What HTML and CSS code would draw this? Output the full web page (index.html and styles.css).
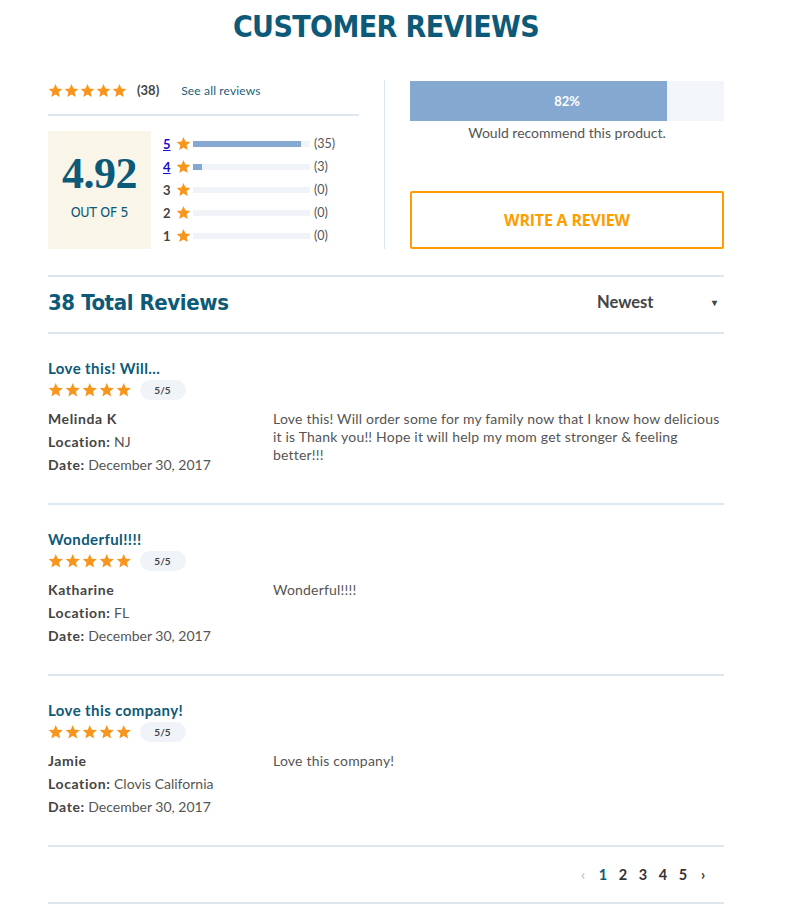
FILE: index.html
```html
<!DOCTYPE html>
<html>
<head>
<meta charset="utf-8">
<link rel="stylesheet" href="styles.css">
</head>
<body>
<svg width="0" height="0" class="defs">
  <defs>
    <symbol id="star" viewBox="0 0 24 24"><path d="M12 1.5l3.1 7.3 7.9.6-6 5.2 1.8 7.7L12 18.2l-6.8 4.1L7 14.6 1 9.4l7.9-.6z"/></symbol>
  </defs>
</svg>
<div class="page">
  <h1 class="title">CUSTOMER REVIEWS</h1>

  <div class="summary">
    <div class="summary-left">
      <div class="top-row">
        <span class="stars">
          <svg class="st"><use href="#star"/></svg><svg class="st"><use href="#star"/></svg><svg class="st"><use href="#star"/></svg><svg class="st"><use href="#star"/></svg><svg class="st"><use href="#star"/></svg>
        </span>
        <span class="count-total">(38)</span>
        <a class="see-all">See all reviews</a>
      </div>
      <div class="score-area">
        <div class="score-box">
          <div class="score">4.92</div>
          <div class="outof">OUT OF 5</div>
        </div>
        <div class="bars">
          <div class="bar-row"><a class="lbl link">5</a><svg class="bst"><use href="#star"/></svg><span class="track"><span class="fill" style="width:92%"></span></span><span class="cnt">(35)</span></div>
          <div class="bar-row"><a class="lbl link">4</a><svg class="bst"><use href="#star"/></svg><span class="track"><span class="fill" style="width:8%"></span></span><span class="cnt">(3)</span></div>
          <div class="bar-row"><span class="lbl">3</span><svg class="bst"><use href="#star"/></svg><span class="track"></span><span class="cnt">(0)</span></div>
          <div class="bar-row"><span class="lbl">2</span><svg class="bst"><use href="#star"/></svg><span class="track"></span><span class="cnt">(0)</span></div>
          <div class="bar-row"><span class="lbl">1</span><svg class="bst"><use href="#star"/></svg><span class="track"></span><span class="cnt">(0)</span></div>
        </div>
      </div>
    </div>
    <div class="summary-right">
      <div class="rec-bar">
        <div class="rec-fill" style="width:82%"></div>
        <div class="rec-label">82%</div>
      </div>
      <div class="rec-text">Would recommend this product.</div>
      <button class="write-btn">WRITE A REVIEW</button>
    </div>
  </div>

  <div class="list-head">
    <h2 class="total">38 Total Reviews</h2>
    <div class="sort"><span>Newest</span><span class="caret">&#9662;</span></div>
  </div>

  <div class="review">
    <div class="r-title">Love this! Will...</div>
    <div class="r-rating">
      <span class="stars rs"><svg class="st"><use href="#star"/></svg><svg class="st"><use href="#star"/></svg><svg class="st"><use href="#star"/></svg><svg class="st"><use href="#star"/></svg><svg class="st"><use href="#star"/></svg></span>
      <span class="pill">5/5</span>
    </div>
    <div class="r-body">
      <div class="meta">
        <div class="name">Melinda K</div>
        <div><b>Location:</b> NJ</div>
        <div><b>Date:</b> December 30, 2017</div>
      </div>
      <p class="text">Love this! Will order some for my family now that I know how delicious it is Thank you!! Hope it will help my mom get stronger &amp; feeling better!!!</p>
    </div>
  </div>

  <div class="review">
    <div class="r-title">Wonderful!!!!</div>
    <div class="r-rating">
      <span class="stars rs"><svg class="st"><use href="#star"/></svg><svg class="st"><use href="#star"/></svg><svg class="st"><use href="#star"/></svg><svg class="st"><use href="#star"/></svg><svg class="st"><use href="#star"/></svg></span>
      <span class="pill">5/5</span>
    </div>
    <div class="r-body">
      <div class="meta">
        <div class="name">Katharine</div>
        <div><b>Location:</b> FL</div>
        <div><b>Date:</b> December 30, 2017</div>
      </div>
      <p class="text">Wonderful!!!!</p>
    </div>
  </div>

  <div class="review">
    <div class="r-title">Love this company!</div>
    <div class="r-rating">
      <span class="stars rs"><svg class="st"><use href="#star"/></svg><svg class="st"><use href="#star"/></svg><svg class="st"><use href="#star"/></svg><svg class="st"><use href="#star"/></svg><svg class="st"><use href="#star"/></svg></span>
      <span class="pill">5/5</span>
    </div>
    <div class="r-body">
      <div class="meta">
        <div class="name">Jamie</div>
        <div><b>Location:</b> Clovis California</div>
        <div><b>Date:</b> December 30, 2017</div>
      </div>
      <p class="text">Love this company!</p>
    </div>
  </div>

  <div class="pager">
    <span class="pg prev">&#8249;</span>
    <span class="pg current">1</span>
    <span class="pg">2</span>
    <span class="pg">3</span>
    <span class="pg">4</span>
    <span class="pg">5</span>
    <span class="pg next">&#8250;</span>
  </div>
</div>
</body>
</html>
```

FILE: styles.css
```css
* { box-sizing: border-box; }
body {
  margin: 0;
  background: #fff;
  font-family: Lato, "Open Sans", sans-serif;
  color: #444;
}
.defs { position: absolute; width: 0; height: 0; }
.page {
  width: 676px;
  margin-left: 48px;
}
.title {
  margin: 0;
  padding-top: 8px;
  height: 80px;
  text-align: center;
  font-family: "DejaVu Sans Condensed", "Open Sans", sans-serif;
  font-weight: bold;
  font-size: 30px;
  line-height: 38px;
  color: #0d5a78;
  letter-spacing: -0.6px;
}
.summary {
  display: grid;
  grid-template-columns: 312px 314px;
  column-gap: 50px;
  border-bottom: 2px solid #dde7f0;
  padding-bottom: 26px;
}
.summary-left {
  border-right: 1px solid #dde7f0;
  margin-right: -25px;
  padding-right: 25px;
}
.top-row {
  display: flex;
  align-items: center;
  height: 20px;
  padding-bottom: 14px;
  border-bottom: 2px solid #dde7f0;
  box-sizing: content-box;
}
.stars { display: inline-flex; gap: 1px; }
.st { width: 15px; height: 15px; fill: #f7961e; }
.rs { gap: 1.5px; }
.rs .st { width: 15.5px; height: 15.5px; }
.count-total {
  margin-left: 10px;
  font-weight: bold;
  font-size: 13px;
  color: #444;
}
.see-all {
  margin-left: 22px;
  font-size: 12px;
  color: #1a5f7c;
  letter-spacing: 0.15px;
}
.score-area {
  display: flex;
  margin-top: 16px;
  gap: 12px;
}
.score-box {
  width: 103px;
  height: 118px;
  margin-top: -1px;
  padding-bottom: 10px;
  background: #f9f6e9;
  display: flex;
  flex-direction: column;
  align-items: center;
  justify-content: center;
  color: #0d5a78;
}
.score {
  font-family: "Liberation Serif", serif;
  font-weight: bold;
  font-size: 44px;
  line-height: 48px;
  letter-spacing: -0.5px;
}
.outof {
  font-family: "DejaVu Sans Condensed", sans-serif;
  font-size: 14px;
  margin-top: 6px;
  letter-spacing: -0.3px;
}
.bars { display: flex; flex-direction: column; }
.bar-row {
  display: flex;
  align-items: center;
  height: 23px;
}
.lbl {
  width: 10px;
  font-size: 13px;
  font-weight: bold;
  color: #444;
}
.lbl.link { color: #1a0dcc; text-decoration: underline; }
.bst { width: 15px; height: 15px; fill: #f7961e; margin-left: 3px; }
.track {
  width: 117px;
  height: 6px;
  background: #f0f4f8;
  margin-left: 2px;
  display: block;
}
.fill { display: block; height: 6px; background: #84a8cf; }
.cnt { margin-left: 4px; font-size: 12.5px; color: #555; }

.summary-right { padding-top: 1px; }
.rec-bar {
  display: grid;
  height: 40px;
  background: #f2f6fa;
}
.rec-fill {
  grid-area: 1 / 1;
  height: 40px;
  background: #84a8cf;
}
.rec-label {
  grid-area: 1 / 1;
  color: #fff;
  font-weight: bold;
  font-size: 13px;
  line-height: 40px;
  text-align: center;
}
.rec-text {
  text-align: center;
  font-size: 14px;
  line-height: 24px;
  color: #555;
}
.write-btn {
  margin-top: 46px;
  width: 314px;
  height: 58px;
  border: 2px solid #ff9d00;
  border-radius: 2px;
  background: #fff;
  color: #ff9d00;
  font-family: "Open Sans", sans-serif;
  font-weight: bold;
  font-size: 16px;
  letter-spacing: -0.2px;
}

.list-head {
  display: flex;
  align-items: center;
  justify-content: space-between;
  height: 57px;
  padding-bottom: 5px;
  border-bottom: 2px solid #dde7f0;
}
.total {
  margin: 0;
  font-family: "DejaVu Sans Condensed", sans-serif;
  font-weight: bold;
  font-size: 22px;
  color: #0d5a78;
  letter-spacing: -0.4px;
}
.sort {
  width: 127px;
  display: flex;
  justify-content: space-between;
  align-items: center;
  font-weight: bold;
  font-size: 16.5px;
  color: #444;
  padding-right: 7px;
}
.caret { font-size: 10px; color: #444; }

.review {
  padding-top: 24px;
  padding-bottom: 27px;
  border-bottom: 2px solid #dde7f0;
}
.r-title {
  font-weight: bold;
  font-size: 15px;
  line-height: 20px;
  letter-spacing: 0.4px;
  color: #0d5a78;
}
.r-rating {
  display: flex;
  align-items: center;
  height: 22px;
  margin-top: 1px;
}
.pill {
  margin-left: 8px;
  width: 46px;
  height: 20px;
  border-radius: 10px;
  background: #f0f4f8;
  font-size: 10px;
  font-weight: bold;
  color: #444;
  display: flex;
  align-items: center;
  justify-content: center;
}
.r-body {
  display: flex;
  margin-top: 6px;
}
.meta {
  width: 225px;
  font-size: 14px;
  line-height: 23px;
  color: #555;
}
.meta b, .name { font-weight: bold; color: #444; letter-spacing: 0.6px; }
.text {
  margin: 3px 0 0;
  width: 450px;
  font-size: 14px;
  line-height: 18px;
  letter-spacing: 0.2px;
  color: #555;
}
.pager {
  display: flex;
  justify-content: flex-end;
  align-items: center;
  height: 57px;
  border-bottom: 2px solid #dde7f0;
  padding-right: 11px;
}
.pg {
  width: 20px;
  text-align: center;
  font-weight: bold;
  font-size: 14.5px;
  color: #333;
}
.prev { color: #c8c8c8; }
.current { color: #0d5a78; }
```
